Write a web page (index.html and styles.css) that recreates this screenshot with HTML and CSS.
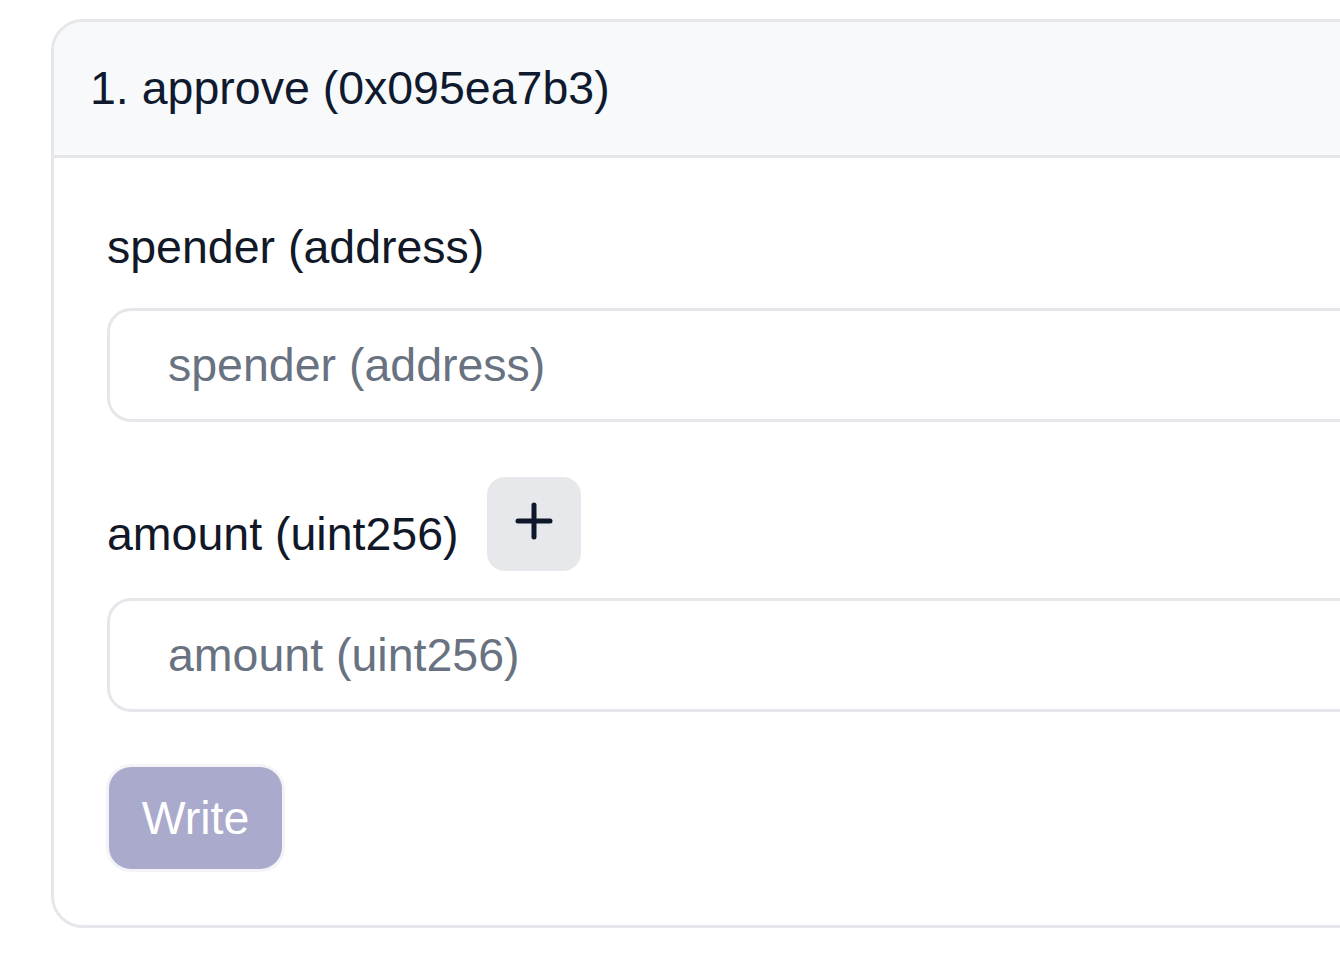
FILE: index.html
```html
<!DOCTYPE html>
<html lang="en">
<head>
<meta charset="utf-8">
<title>approve</title>
<link rel="stylesheet" href="styles.css">
</head>
<body>
<div class="card">
  <div class="card-header">1. approve (0x095ea7b3)</div>
  <div class="card-body">
    <div class="field">
      <div class="label-row">
        <label class="label" for="spender">spender (address)</label>
      </div>
      <input id="spender" class="input" type="text" placeholder="spender (address)">
    </div>
    <div class="field">
      <div class="label-row">
        <label class="label" for="amount">amount (uint256)</label>
        <button class="plus-btn" type="button" aria-label="add">
          <svg width="40" height="40" viewBox="0 0 40 40"><path d="M20 4v32M4 20h32" stroke="#0f172a" stroke-width="5" stroke-linecap="round" fill="none"/></svg>
        </button>
      </div>
      <input id="amount" class="input" type="text" placeholder="amount (uint256)">
    </div>
    <div class="actions">
      <button class="write-btn" type="button" disabled>Write</button>
    </div>
  </div>
</div>
</body>
</html>
```

FILE: styles.css
```css
html, body {
  margin: 0;
  padding: 0;
  overflow: hidden;
  background: #ffffff;
}

body {
  font-family: "Liberation Sans", Arial, Helvetica, sans-serif;
  font-size: 46.5px;
  line-height: 69px;
  color: #111827;
  padding: 19px 0 0 51px;
}

.card {
  width: 1400px;
  border: 3px solid #e5e7eb;
  border-radius: 32px;
  overflow: hidden;
  background: #ffffff;
}

.card-header {
  background: #f8f9fb;
  border-bottom: 3px solid #e5e7eb;
  padding: 32px 0 32px 36px;
  color: #0f1a2e;
}

.card-body {
  display: flex;
  flex-direction: column;
  gap: 55px;
  padding: 55px 0 56px 53px;
}

.field {
  display: flex;
  flex-direction: column;
}

.label-row {
  display: flex;
  align-items: flex-end;
  gap: 28px;
  margin-bottom: 26px;
}

.label {
  color: #111827;
}

.field:nth-child(2) .label-row {
  margin-bottom: 27px;
}

.field:nth-child(2) .label {
  margin-bottom: 2px;
}

.plus-btn {
  width: 94px;
  height: 94px;
  margin-top: 0;
  border: none;
  border-radius: 18px;
  background: #e6e8ec;
  display: flex;
  align-items: center;
  justify-content: center;
  padding: 0 0 6px 0;
}

.input {
  box-sizing: border-box;
  width: 1300px;
  height: 114px;
  border: 3px solid #e5e7eb;
  border-radius: 24px;
  padding: 0 0 0 58px;
  font-family: inherit;
  font-size: 46.5px;
  color: #111827;
  background: #ffffff;
  outline: none;
}

.input::placeholder {
  color: #687280;
}

.actions {
  display: flex;
}

.write-btn {
  width: 173px;
  height: 102px;
  margin-left: 2px;
  border: none;
  border-radius: 22px;
  background: #aaaacd;
  color: #ffffff;
  font-family: inherit;
  font-size: 46.5px;
  padding: 0;
  box-shadow: 0 0 0 3px #f4f4f8;
}
```
